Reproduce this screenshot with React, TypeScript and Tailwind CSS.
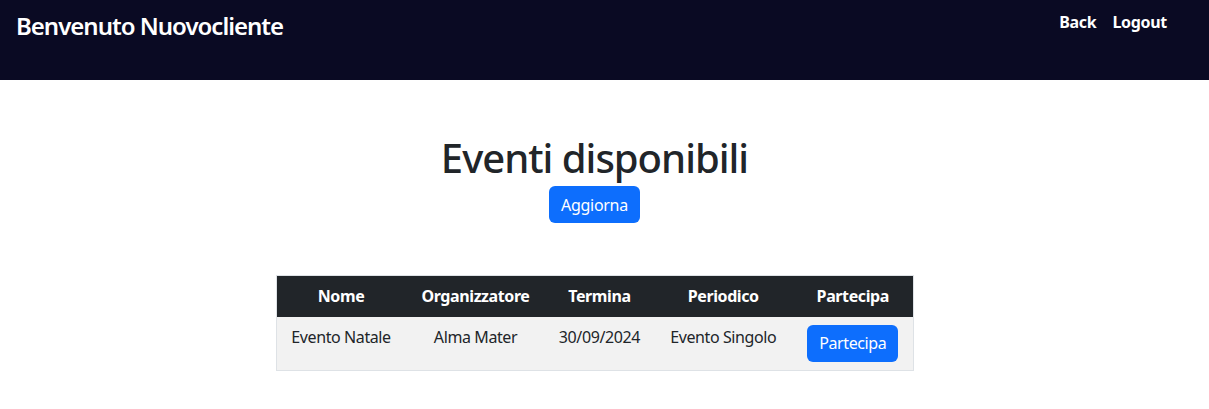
const events = [
  {
    nome: 'Evento Natale',
    organizzatore: 'Alma Mater',
    termina: '30/09/2024',
    periodico: 'Evento Singolo',
  },
]

const font = { fontFamily: '"Noto Sans", "Open Sans", sans-serif' }

export default function App() {
  return (
    <div className="min-h-screen bg-white text-[#212529]" style={font}>
      <nav className="h-20 bg-[#0a0a23] flex justify-between items-start pl-4 pr-[42px] pt-2">
        <h2 className="text-white text-2xl font-semibold leading-9 tracking-[-1px]">Benvenuto Nuovocliente</h2>
        <div className="flex gap-4 pt-0.5 text-white font-bold text-base leading-6 tracking-[-0.3px]">
          <a href="#">Back</a>
          <a href="#">Logout</a>
        </div>
      </nav>

      <main className="flex flex-col items-center pt-[54px] pr-[20px]">
        <h1 className="text-[40px] font-medium leading-[48px] tracking-[-1px]">Eventi disponibili</h1>
        <button className="mt-1 h-[37px] px-3 rounded-md bg-[#0d6efd] text-white text-base leading-6 tracking-[-0.3px]">
          Aggiorna
        </button>

        <table className="mt-[52px] w-[638px] border border-[#dee2e6] text-center text-base leading-6 tracking-[-0.4px]">
          <thead>
            <tr className="bg-[#212529] text-white font-bold">
              <th className="w-[130px] h-[41px] px-2">Nome</th>
              <th className="w-[140px] px-2">Organizzatore</th>
              <th className="w-[108px] px-2">Termina</th>
              <th className="w-[140px] px-2">Periodico</th>
              <th className="w-[120px] px-2">Partecipa</th>
            </tr>
          </thead>
          <tbody>
            {events.map((ev, i) => (
              <tr key={i} className="bg-[#f2f2f2] align-top">
                <td className="p-2">{ev.nome}</td>
                <td className="p-2">{ev.organizzatore}</td>
                <td className="p-2">{ev.termina}</td>
                <td className="p-2">{ev.periodico}</td>
                <td className="p-2">
                  <button className="h-[37px] px-3 rounded-md bg-[#0d6efd] text-white">Partecipa</button>
                </td>
              </tr>
            ))}
          </tbody>
        </table>
      </main>
    </div>
  )
}
